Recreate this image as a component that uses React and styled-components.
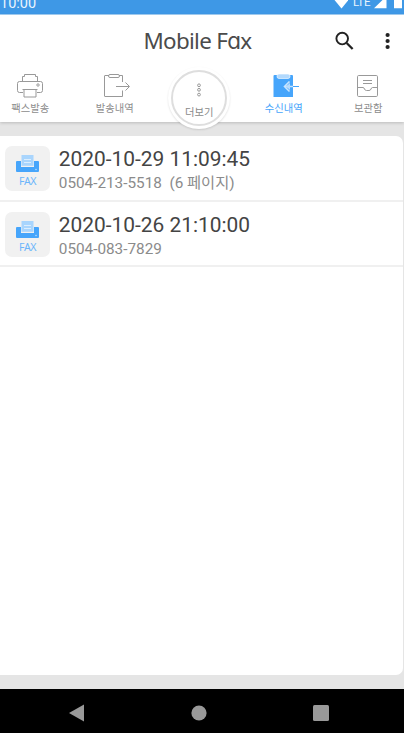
import React from 'react';
import styled, { createGlobalStyle } from 'styled-components';

const GlobalStyle = createGlobalStyle`
  * {
    box-sizing: border-box;
  }
  body {
    margin: 0;
    background: #e5e5e5;
    font-family: Roboto, 'Noto Sans CJK KR', sans-serif;
  }
  svg {
    display: block;
  }
`;

const Screen = styled.div`
  display: flex;
  flex-direction: column;
  width: 404px;
  height: 733px;
  overflow: hidden;
  background: #e5e5e5;
`;

const StatusBar = styled.div`
  display: flex;
  justify-content: space-between;
  flex: none;
  height: 15px;
  overflow: hidden;
  background: #3e98e6;
  border-bottom: 1px solid #a3cff4;
  color: #e9f4fd;
`;

const Clock = styled.span`
  margin: -5.5px 0 0 0;
  font-size: 14.5px;
  line-height: 18px;
`;

const StatusIcons = styled.div`
  display: flex;
  align-items: flex-start;
`;

const Network = styled.span`
  width: 18px;
  margin: -5px 3px 0 5px;
  font-size: 11.5px;
  line-height: 14px;
  letter-spacing: -0.3px;
`;

const Header = styled.header`
  flex: none;
  height: 107px;
  background: #fff;
  box-shadow: 0 1px 3px rgba(0, 0, 0, 0.18);
`;

const TitleBar = styled.div`
  display: grid;
  grid-template-columns: 1fr auto 1fr;
  align-items: center;
  height: 52px;
`;

const Title = styled.h1`
  grid-column: 2;
  width: 112px;
  margin: 0 0 0 -5px;
  font-family: 'Noto Sans', sans-serif;
  font-size: 22.4px;
  font-weight: 400;
  line-height: 30px;
  letter-spacing: -0.7px;
  white-space: nowrap;
  color: #4b4b4b;
`;

// single-storey a
const RoundA = styled.span`
  font-family: Inter, sans-serif;
  font-feature-settings: 'cv11';
`;

const Actions = styled.div`
  display: flex;
  justify-content: flex-end;
  align-items: center;
  gap: 30px;
  padding-right: 13px;
`;

const TabList = styled.nav`
  display: grid;
  grid-template-columns: repeat(5, 84.5px);
  margin-left: -12px;
  width: 422.5px;
`;

const Tab = styled.div`
  display: flex;
  flex-direction: column;
  align-items: center;
  padding-top: 6px;
  color: ${({ $active }) => ($active ? '#46a5fb' : '#8d8d8d')};
`;

const TabLabel = styled.span`
  margin-top: 1px;
  font-family: 'Noto Sans CJK KR', sans-serif;
  font-size: 10.3px;
  line-height: 15px;
  white-space: nowrap;
`;

const MoreTab = styled.div`
  display: flex;
  justify-content: center;
  height: 55px;
`;

const MoreRing = styled.div`
  flex: none;
  width: 62px;
  height: 62px;
  padding: 3px;
  border-radius: 50%;
  background: #fff;
  box-shadow: 0 1px 2px rgba(0, 0, 0, 0.12);
`;

const MoreButton = styled.div`
  display: flex;
  flex-direction: column;
  align-items: center;
  height: 56px;
  padding-top: 11px;
  border: 2px solid #dedede;
  border-radius: 50%;
  color: #8a8a8a;
`;

const MoreLabel = styled(TabLabel)`
  margin-top: 7px;
`;

const Card = styled.main`
  flex: 1;
  margin: 14px 1px 14px 0;
  border-radius: 0 7px 7px 0;
  background: #fff;
`;

const Row = styled.div`
  display: flex;
  height: 65.5px;
  padding: 10px 5px 0;
  border-bottom: 2px solid #f0f0f0;
`;

const FaxBadge = styled.div`
  display: flex;
  flex-direction: column;
  align-items: center;
  flex: none;
  width: 45px;
  height: 45px;
  padding-top: 9px;
  border-radius: 7px;
  background: #f1f1f1;
`;

const FaxText = styled.span`
  margin-top: 1px;
  font-family: 'Noto Sans', sans-serif;
  font-size: 10.6px;
  line-height: 14px;
  letter-spacing: -0.5px;
  color: #6bb5fb;
`;

const RowText = styled.div`
  padding-left: 8.8px;
`;

const DateText = styled.div`
  font-size: 20.9px;
  line-height: 26px;
  color: #444;
  white-space: pre;
`;

const NumberText = styled.div`
  font-size: 15.3px;
  line-height: 22px;
  color: #8b8b8b;
  white-space: pre;
`;

const NavBar = styled.footer`
  flex: none;
  display: grid;
  grid-template-columns: repeat(3, 122px);
  justify-items: center;
  align-items: center;
  height: 44px;
  padding: 4px 0 0 15.5px;
  background: #000;
`;

const SearchIcon = () => (
  <svg width='20' height='20' viewBox='0 0 20 20' fill='none' stroke='#222'>
    <circle cx='7.2' cy='7.6' r='5.8' strokeWidth='1.9' />
    <path d='M11.6 12l6 6' strokeWidth='2.3' />
  </svg>
);

const DotsIcon = () => (
  <svg width='6' height='18' viewBox='0 0 6 18' fill='#222'>
    <circle cx='2.6' cy='3' r='2.1' />
    <circle cx='2.6' cy='9' r='2.1' />
    <circle cx='2.6' cy='15' r='2.1' />
  </svg>
);

const PrinterIcon = () => (
  <svg width='26' height='26' viewBox='0 0 26 26' fill='none' stroke='#999'>
    <path d='M5.5 8V3.5h2v-2h11v2h2V8' />
    <path d='M6 19.5H2.5q-2 0-2-2v-7q0-2 2-2h21q2 0 2 2v7q0 2-2 2H20' />
    <path d='M5.5 16.5h15M7 16.5v7.5h12v-7.5' />
    <circle cx='21' cy='12' r='1.2' />
  </svg>
);

const SentIcon = () => (
  <svg width='30' height='26' viewBox='-4 0 30 26' fill='none' stroke='#999'>
    <path d='M5 2.5H1q-.5 0-.5.5v20q0 .5.5.5h17.500v-6M15 2.500h3.500V9' />
    <rect x='4.5' y='1.5' width='11' height='3' rx='1.5' />
    <path d='M12 13.5h13M21.5 9.5l4 4-4 4' />
  </svg>
);

const ReceivedIcon = () => (
  <svg width='30' height='26' viewBox='-4 0 30 26' fill='none'>
    <path d='M1.5 2H19q1 0 1 1v21H.5V3q0-1 1-1z' fill='#46a5fb' />
    <rect x='4' y='1' width='13' height='4.5' rx='2' fill='#b2d9fd' stroke='#fff' strokeWidth='.6' />
    <path d='M11.5 13.5H20M16.5 8.5l-5 5 5 5' stroke='#c8e4fe' strokeWidth='1.6' />
    <path d='M13 13.5l4-3.5v7z' fill='#b8dcfd' />
    <path d='M20 13.5h6' stroke='#46a5fb' />
  </svg>
);

const ArchiveIcon = () => (
  <svg width='22' height='26' viewBox='0 0 22 26' fill='none' stroke='#999'>
    <rect x='.5' y='2.5' width='20' height='21' rx='1.2' />
    <path d='M.5 14.5h5.500q1 0 1.500 1.500.5 1.500 2 1.500h2.500q1.500 0 2-1.500.5-1.500 1.500-1.500h5' />
    <path d='M6 7.500h9M6 10.500h9' />
  </svg>
);

const MoreIcon = () => (
  <svg width='6' height='14' viewBox='0 0 6 14' fill='none' stroke='#999'>
    <circle cx='3' cy='2.3' r='1.4' />
    <circle cx='3' cy='6.8' r='1.4' />
    <circle cx='3' cy='11.6' r='1.4' />
  </svg>
);

const FaxIcon = () => (
  <svg width='23' height='18' viewBox='0 0 23 18'>
    <path d='M1 6h4v6h13V6h4q1 0 1 1v9q0 1-1 1H1q-1 0-1-1V7q0-1 1-1z' fill='#46a5fb' />
    <path d='M5.5 0h12v10.8h-12z' fill='#a9d5fd' />
    <path d='M8 4.5h7M8 7.5h7' stroke='#fff' strokeWidth='.6' />
    <circle cx='20' cy='14.5' r='.8' fill='#b8dcfd' />
  </svg>
);

const faxList = [
  { id: 1, date: '2020-10-29 11:09:45', number: '0504-213-5518', page: '  (6 페이지)' },
  { id: 2, date: '2020-10-26 21:10:00', number: '0504-083-7829', page: '' },
];

function App() {
  return (
    <>
      <GlobalStyle />
      <Screen>
        <StatusBar>
          <Clock>10:00</Clock>
          <StatusIcons>
            <svg width='14' height='9' viewBox='0 0 14 9' fill='#fff'>
              <path d='M.5 0h14L7.5 8.5z' />
            </svg>
            <Network>LTE</Network>
            <svg width='30' height='9' viewBox='0 0 30 9' fill='#fff'>
              <path d='M0 8.3L8.5 0H12.5v8.3zM20 0h8v8.3h-8z' />
            </svg>
          </StatusIcons>
        </StatusBar>
        <Header>
          <TitleBar>
            <Title>
              Mobile F<RoundA>a</RoundA>x
            </Title>
            <Actions>
              <SearchIcon />
              <DotsIcon />
            </Actions>
          </TitleBar>
          <TabList>
            <Tab>
              <PrinterIcon />
              <TabLabel>팩스발송</TabLabel>
            </Tab>
            <Tab>
              <SentIcon />
              <TabLabel>발송내역</TabLabel>
            </Tab>
            <MoreTab>
              <MoreRing>
                <MoreButton>
                  <MoreIcon />
                  <MoreLabel>더보기</MoreLabel>
                </MoreButton>
              </MoreRing>
            </MoreTab>
            <Tab $active>
              <ReceivedIcon />
              <TabLabel>수신내역</TabLabel>
            </Tab>
            <Tab>
              <ArchiveIcon />
              <TabLabel>보관함</TabLabel>
            </Tab>
          </TabList>
        </Header>
        <Card>
          {faxList.map((fax) => (
            <Row key={fax.id}>
              <FaxBadge>
                <FaxIcon />
                <FaxText>FAX</FaxText>
              </FaxBadge>
              <RowText>
                <DateText>{fax.date}</DateText>
                <NumberText>
                  {fax.number}
                  {fax.page}
                </NumberText>
              </RowText>
            </Row>
          ))}
        </Card>
        <NavBar>
          <svg width='16' height='18' viewBox='0 0 16 18' fill='#999'>
            <path d='M0 9L15 .5v17z' />
          </svg>
          <svg width='16' height='16' viewBox='0 0 16 16' fill='#999'>
            <circle cx='8' cy='8' r='7.6' />
          </svg>
          <svg width='16' height='16' viewBox='0 0 16 16' fill='#999'>
            <rect width='16' height='16' rx='1.5' />
          </svg>
        </NavBar>
      </Screen>
    </>
  );
}

export default App;
